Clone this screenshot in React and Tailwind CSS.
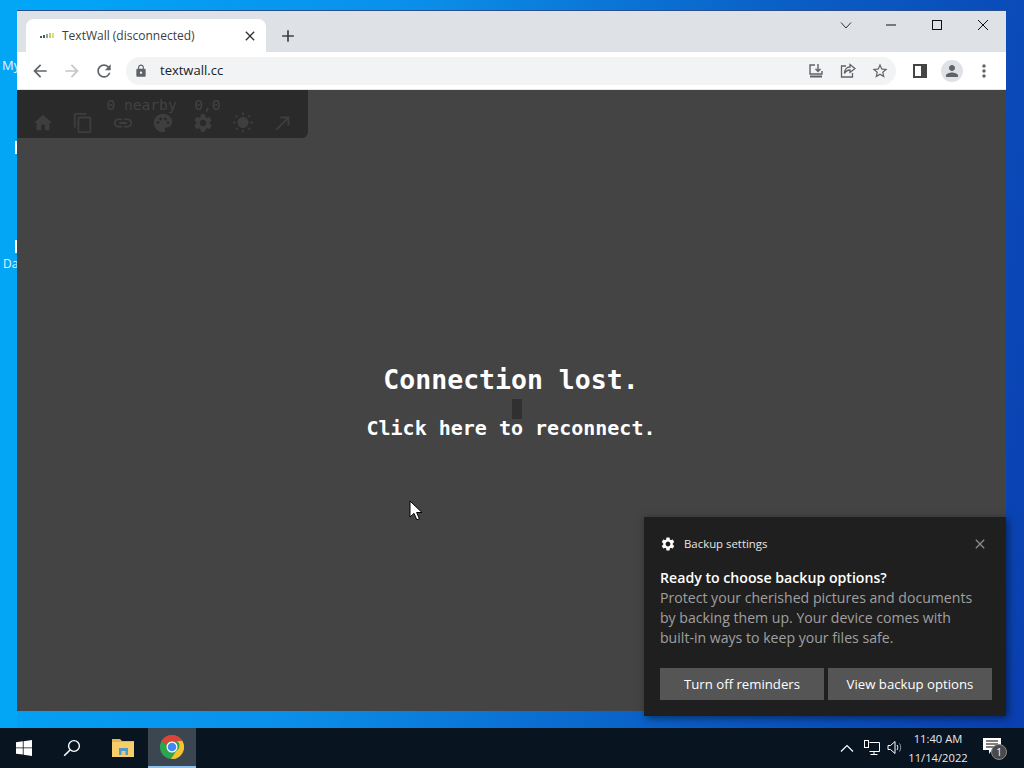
import React from "react";
import { MdHome, MdContentCopy, MdLink, MdPalette, MdSettings, MdWbSunny, MdCallMade, MdLock, MdStarBorder, MdMoreVert, MdPerson, MdArrowBack, MdArrowForward, MdRefresh, MdAdd, MdClose } from "react-icons/md";

const ui = "font-['Open_Sans','Noto_Sans',sans-serif]";

function Favicon() {
  return (
    <svg width="14" height="8" viewBox="0 0 14 8">
      <rect x="0" y="4" width="2" height="2" fill="#555" />
      <rect x="3" y="3" width="2" height="3" fill="#555" />
      <rect x="6" y="2" width="2" height="4" fill="#8a8" />
      <rect x="9" y="1" width="2" height="5" fill="#cc6" />
      <rect x="12" y="1" width="2" height="5" fill="#dd8" />
    </svg>
  );
}

function Chrome() {
  return (
    <svg width="24" height="24" viewBox="0 0 48 48">
      <circle cx="24" cy="24" r="24" fill="#2da44e" />
      <path d="M24 0a24 24 0 0 1 20.8 12H24a12 12 0 0 0-11.5 8.5L3.2 12A24 24 0 0 1 24 0z" fill="#db4437" />
      <path d="M44.8 12A24 24 0 0 1 22 47.9L32.5 32A12 12 0 0 0 34.4 12z" fill="#fbc02d" />
      <circle cx="24" cy="24" r="11" fill="#fff" />
      <circle cx="24" cy="24" r="8.6" fill="#4285f4" />
    </svg>
  );
}

function Download() {
  return (
    <svg width="16" height="16" viewBox="0 0 16 16" fill="none" stroke="#5f6368" strokeWidth="1.4">
      <path d="M7 2H2v9h12V8" />
      <path d="M2 13.5h12" strokeWidth="2" />
      <path d="M10 1v7M7.5 5.8 10 8.4l2.5-2.6" />
    </svg>
  );
}

function Share() {
  return (
    <svg width="16" height="16" viewBox="0 0 16 16" fill="none" stroke="#5f6368" strokeWidth="1.3">
      <path d="M6 3H1.5v11h11v-4" />
      <path d="M10 1.5 15 5.5 10 9.5V7C7 7 5.5 8.5 4.5 10.5 4.5 7 6.5 4 10 4z" />
    </svg>
  );
}

function SidePanel() {
  return (
    <svg width="14" height="14" viewBox="0 0 14 14">
      <path fillRule="evenodd" d="M0 0h14v14H0zM2 2v10h6V2z" fill="#444" />
    </svg>
  );
}

function WinLogo() {
  return (
    <svg width="16" height="16" viewBox="0 0 16 16" fill="#fff">
      <path d="M0 2.3 6.8 1.3v6.2H0zM7.6 1.2 16 0v7.5H7.6zM0 8.3h6.8v6.3L0 13.7zM7.6 8.3H16V16l-8.4-1.2z" />
    </svg>
  );
}

function SearchIcon() {
  return (
    <svg width="18" height="18" viewBox="0 0 18 18" fill="none" stroke="#fff" strokeWidth="1.4">
      <circle cx="11" cy="7" r="5.4" />
      <path d="M7 11 1.2 16.8" strokeWidth="1.6" />
    </svg>
  );
}

function Folder() {
  return (
    <svg width="22" height="20" viewBox="0 0 22 20">
      <path d="M0 1h8l2 2h12v16H0z" fill="#e9b44c" />
      <rect x="0" y="4" width="22" height="15" fill="#f6cf6a" />
      <rect x="7" y="10" width="9" height="7" fill="#4f9bc9" />
      <rect x="9.5" y="13" width="4" height="4" fill="#e9c675" />
    </svg>
  );
}

function Network() {
  return (
    <svg width="16" height="16" viewBox="0 0 16 16" fill="none" stroke="#fff" strokeWidth="1">
      <path d="M5.5 2.5h10v9h-10" />
      <rect x="0.5" y="0.5" width="4" height="7" />
      <path d="M10 11.5v3M6.5 14.5h7" />
    </svg>
  );
}

function Speaker() {
  return (
    <svg width="16" height="16" viewBox="0 0 16 16" fill="none" stroke="#fff" strokeWidth="1">
      <path d="M1 5.5h2.5L8 1.5v12l-4.5-4H1z" />
      <path d="M10 5c1 1.4 1 3.6 0 5" />
      <path d="M12.5 3.5c1.6 2.4 1.6 5.6 0 8" stroke="#999" />
    </svg>
  );
}

function Cursor() {
  return (
    <svg width="14" height="22" viewBox="0 0 14 22">
      <path d="M1 1v16l4-3.6 2.8 6.4 2.6-1.1-2.8-6.2H13z" fill="#fff" stroke="#000" strokeWidth="1" />
    </svg>
  );
}

function Toolbar() {
  const Icons = [MdHome, MdContentCopy, MdLink, MdPalette, MdSettings, MdWbSunny, MdCallMade];
  return (
    <div className="absolute left-0 top-0 w-[291px] h-[48px] bg-[#2a2a2a] rounded-br-md flex flex-col items-center">
      <div className="h-[22px] pt-[5px] leading-[20px] text-[14.6px] font-normal text-[#424242] font-['DejaVu_Sans_Mono',monospace] whitespace-pre pl-[2px]">
        0 nearby  0,0
      </div>
      <div className="flex w-full pl-[15px] gap-[18px]">
        {Icons.map((I, i) => (
          <I key={i} size={22} className="text-[#3e3e3e]" />
        ))}
      </div>
    </div>
  );
}

function Toast() {
  return (
    <div className={`absolute left-[644px] top-[517px] w-[362px] h-[199px] bg-[#1f1f1f] shadow-[2px_2px_8px_rgba(0,0,0,0.5)] pl-[16px] pr-[14px] ${ui} flex flex-col`}>
      <div className="flex items-center h-[21px] mt-[16px]">
        <MdSettings size={16} className="text-white" />
        <span className="ml-[8px] text-[11.4px] text-[#e6e6e6] leading-none">Backup settings</span>
        <MdClose size={16} className="ml-auto mr-[4px] text-[#8a8a8a]" />
      </div>
      <div className="mt-[14px] text-[14.15px] leading-[20px] font-semibold text-white whitespace-nowrap">Ready to choose backup options?</div>
      <div className="text-[14.1px] leading-[20px] text-[#a0a0a0] whitespace-nowrap">
        <div>Protect your cherished pictures and documents</div>
        <div>by backing them up. Your device comes with</div>
        <div>built-in ways to keep your files safe.</div>
      </div>
      <div className="flex gap-[4px] mt-[20px]">
        <div className="w-[164px] h-[32px] pt-[1px] bg-[#555555] flex items-center justify-center text-[13.2px] text-white">Turn off reminders</div>
        <div className="w-[164px] h-[32px] pt-[1px] bg-[#555555] flex items-center justify-center text-[13.2px] text-white">View backup options</div>
      </div>
    </div>
  );
}

function Browser() {
  return (
    <div className={`absolute left-[17px] top-[10px] w-[989px] h-[701px] flex flex-col ${ui} border-t border-[#2a4f8f]`}>
      <div className="h-[41px] bg-[#dee1e6] flex items-end pl-[9px] relative">
        <div className="w-[240px] h-[33px] bg-white rounded-t-lg flex items-center pl-[14px] pr-[8px]">
          <Favicon />
          <span className="ml-[8px] text-[12px] text-[#3c4043] whitespace-nowrap">TextWall (disconnected)</span>
          <MdClose size={16} className="ml-auto text-[#333]" />
        </div>
        <div className="h-[33px] flex items-center ml-[12px]">
          <MdAdd size={20} className="text-[#3c4043]" />
        </div>
        <div className="ml-auto self-start flex items-center h-[28px] pr-[18px] mt-0">
          <svg width="12" height="12" viewBox="0 0 12 12" fill="none" stroke="#333" strokeWidth="1"><path d="M1 3.5 6 9l5-5.5" /></svg>
          <svg className="ml-[34px]" width="10" height="10" viewBox="0 0 10 10" stroke="#111" strokeWidth="1"><path d="M0 5h10" /></svg>
          <svg className="ml-[36px]" width="10" height="10" viewBox="0 0 10 10" fill="none" stroke="#111" strokeWidth="1"><rect x="0.5" y="0.5" width="9" height="9" /></svg>
          <svg className="ml-[36px]" width="10" height="10" viewBox="0 0 10 10" fill="none" stroke="#111" strokeWidth="1"><path d="M0 0l10 10M10 0 0 10" /></svg>
        </div>
      </div>
      <div className="h-[38px] bg-white flex items-center pl-[13px] border-b border-[#e4e4e4]">
        <MdArrowBack size={20} className="text-[#5f6368]" />
        <MdArrowForward size={20} className="ml-[12px] text-[#c4c6c9]" />
        <MdRefresh size={20} className="ml-[12px] text-[#5f6368]" />
        <div className="ml-[12px] w-[770px] h-[28px] rounded-full bg-[#f1f3f4] flex items-center pl-[8px] pr-[7px]">
          <MdLock size={14} className="text-[#5f6368]" />
          <span className="ml-[12px] text-[13px] text-[#202124]">textwall.cc</span>
          <div className="ml-auto flex items-center gap-[16px]">
            <Download />
            <Share />
            <MdStarBorder size={18} className="text-[#5f6368] -ml-[1px]" />
          </div>
        </div>
        <div className="ml-[17px]"><SidePanel /></div>
        <div className="ml-[14px] w-[22px] h-[22px] rounded-full bg-[#dee1e6] flex items-center justify-center">
          <MdPerson size={18} className="text-[#5f6368]" />
        </div>
        <MdMoreVert size={20} className="ml-[11px] text-[#5f6368]" />
      </div>
      <div className="flex-1 bg-[#444444] relative flex flex-col items-center pt-[273px] pr-[1px] font-['DejaVu_Sans_Mono',monospace] font-bold text-white">
        <Toolbar />
        <div className="text-[26.5px] leading-[34px]">Connection lost.</div>
        <div className="text-[20px] leading-[26px] mt-[18px]">Click here to reconnect.</div>
        <div className="absolute left-[495px] top-[309px] w-[10px] h-[20px] bg-[#303030]" />
      </div>
    </div>
  );
}

function Taskbar() {
  return (
    <div className={`absolute left-0 top-[728px] w-[1024px] h-[40px] bg-[#081420] flex items-center ${ui}`}>
      <div className="w-[48px] h-full flex items-center justify-center"><WinLogo /></div>
      <div className="w-[48px] h-full flex items-center justify-center"><SearchIcon /></div>
      <div className="w-[52px] h-full flex items-center justify-center pl-[1px]"><Folder /></div>
      <div className="w-[48px] h-full bg-[#3b4650] border-b-2 border-[#8ec2ee] flex items-center justify-center"><Chrome /></div>
      <div className="ml-auto flex items-center h-full">
        <svg width="14" height="8" viewBox="0 0 14 8" fill="none" stroke="#fff" strokeWidth="1.2"><path d="M1 7.5 7 1.5l6 6" /></svg>
        <div className="ml-[10px]"><Network /></div>
        <div className="ml-[7px]"><Speaker /></div>
        <div className="ml-[5px] w-[60px] text-center text-[11.2px] leading-[19px] text-[#e8e8e8] whitespace-nowrap">
          <div>11:40 AM</div>
          <div>11/14/2022</div>
        </div>
        <div className="ml-[15px] mr-[19px] relative w-[22px] h-[22px]">
          <svg width="18" height="16" viewBox="0 0 18 16" fill="#fff" className="absolute left-0 top-[1px]">
            <path d="M0 0h18v12H9l-3 4v-4H0z" />
            <path d="M3 3h12M3 6h12M3 9h9" stroke="#000" />
          </svg>
          <div className="absolute left-[8px] top-[7px] w-[16px] h-[16px] rounded-full bg-[#4a4a4a] border border-[#888] flex items-center justify-center text-[10px] leading-none text-white">1</div>
        </div>
      </div>
    </div>
  );
}

export default function App() {
  return (
    <div className="relative w-[1024px] h-[768px] overflow-hidden bg-[linear-gradient(100deg,#00a8f8_0%,#0a90ea_35%,#0a5cc4_70%,#0a3fb0_100%)]">
      <div className="absolute left-0 top-0 w-[17px] h-[728px] bg-[#03a5f5]" />
      <div className={`absolute left-[2px] top-[56px] text-[13px] text-[#e4f5ff] ${ui}`}>My</div>
      <div className={`absolute left-[3px] top-[255px] text-[12px] text-[#e4f5ff] ${ui}`}>Da</div>
      <div className="absolute left-[15px] top-[141px] w-[2px] h-[13px] bg-white" />
      <div className="absolute left-[15px] top-[240px] w-[2px] h-[13px] bg-white" />
      <Browser />
      <Toast />
      <Taskbar />
      <div className="absolute left-[409px] top-[500px]"><Cursor /></div>
    </div>
  );
}
